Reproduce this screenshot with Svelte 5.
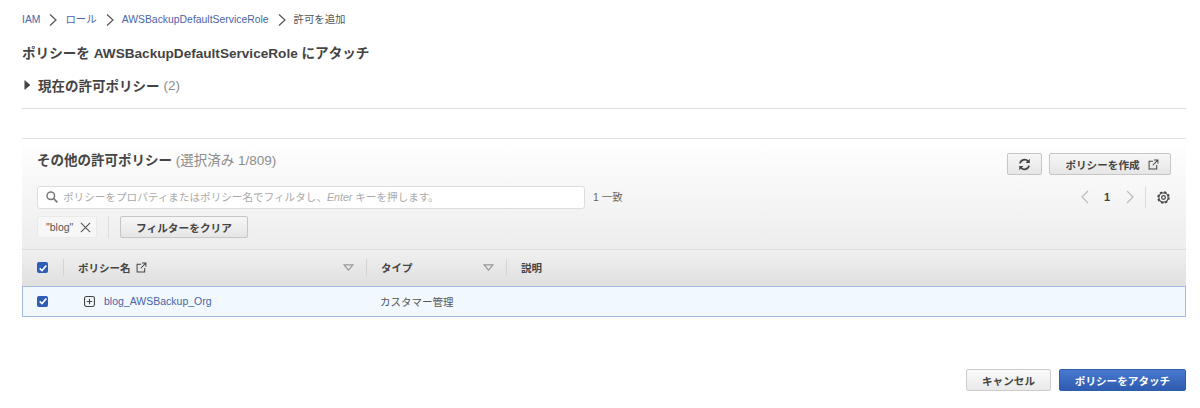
<script>
  const roleName = 'AWSBackupDefaultServiceRole';
</script>

<div class="page">
  <nav class="crumbs">
    <a href="#iam">IAM</a>
    <svg class="sep" viewBox="0 0 10 14" width="10" height="14"><path d="M2 1.5 8 7 2 12.5" /></svg>
    <a href="#role">ロール</a>
    <svg class="sep" viewBox="0 0 10 14" width="10" height="14"><path d="M2 1.5 8 7 2 12.5" /></svg>
    <a href="#name">{roleName}</a>
    <svg class="sep" viewBox="0 0 10 14" width="10" height="14"><path d="M2 1.5 8 7 2 12.5" /></svg>
    <span>許可を追加</span>
  </nav>

  <h1>ポリシーを {roleName} にアタッチ</h1>

  <div class="current">
    <svg viewBox="0 0 8 12" width="8" height="12"><path d="M2.8 1.6 8 6 2.8 10.4Z" fill="#444" stroke="#444" stroke-width="0.6" /></svg>
    <strong>現在の許可ポリシー</strong>
    <span class="count">(2)</span>
  </div>

  <div class="rule"></div>

  <section class="panel">
    <div class="panel-head">
      <div class="title-row">
        <h2>その他の許可ポリシー <span class="count">(選択済み 1/809)</span></h2>
        <div class="actions">
          <button class="btn icon-btn" aria-label="更新">
            <svg viewBox="0 0 16 16" width="13" height="13">
              <path d="M2.4 6.6A5.8 5.8 0 0 1 12.4 4" fill="none" stroke="#444" stroke-width="2.2" />
              <path d="M14.5 1v5.2H9.3Z" fill="#444" />
              <path d="M13.6 9.4A5.8 5.8 0 0 1 3.6 12" fill="none" stroke="#444" stroke-width="2.2" />
              <path d="M1.5 15V9.8h5.2Z" fill="#444" />
            </svg>
          </button>
          <button class="btn create">
            ポリシーを作成
            <svg class="ext" viewBox="0 0 12 12" width="11" height="11">
              <path d="M5.5 2.5H1.2v8.3h8.3V6.5M6.5 1h4.3v4.3M10.6 1.2 5.2 6.8" />
            </svg>
          </button>
        </div>
      </div>

      <div class="search-row">
        <div class="search">
          <svg viewBox="0 0 14 14" width="12" height="12">
            <circle cx="5.6" cy="5.6" r="4.4" fill="none" stroke="#777" stroke-width="1.7" />
            <path d="M9 9l4.2 4.2" stroke="#777" stroke-width="2" />
          </svg>
          <span>ポリシーをプロパティまたはポリシー名でフィルタし、<em>Enter</em> キーを押します。</span>
        </div>
        <span class="match">1 一致</span>
        <div class="pager">
          <svg class="chev" viewBox="0 0 10 14" width="10" height="14"><path d="M8 1 2 7l6 6" /></svg>
          <b>1</b>
          <svg class="chev" viewBox="0 0 10 14" width="10" height="14"><path d="M2 1l6 6-6 6" /></svg>
          <i class="pager-sep"></i>
          <svg class="gear" viewBox="0 0 14 14" width="13" height="13">
            <circle cx="7" cy="7" r="6" fill="none" stroke="#444" stroke-width="1.5" stroke-dasharray="2.6 2.11" />
            <circle cx="7" cy="7" r="5" fill="none" stroke="#444" stroke-width="1.3" />
            <circle cx="7" cy="7" r="2" fill="none" stroke="#444" stroke-width="1.3" />
          </svg>
        </div>
      </div>

      <div class="filter-row">
        <span class="token">"blog"
          <svg viewBox="0 0 12 12" width="11" height="11"><path d="M1 1l10 10M11 1 1 11" /></svg>
        </span>
        <i class="filter-sep"></i>
        <button class="btn clear">フィルターをクリア</button>
      </div>
    </div>

    <div class="table-head">
      <div class="cell-check">
        <span class="check"><svg viewBox="0 0 12 12" width="10" height="10"><path d="M2 6.4 4.8 9 10 3" /></svg></span>
      </div>
      <div class="col-name">
        <span>ポリシー名</span>
        <svg class="ext" viewBox="0 0 12 12" width="11" height="11">
          <path d="M5.5 2.5H1.2v8.3h8.3V6.5M6.5 1h4.3v4.3M10.6 1.2 5.2 6.8" />
        </svg>
        <svg class="sort" viewBox="0 0 12 8" width="11" height="7"><path d="M1 1h10L6 7Z" /></svg>
      </div>
      <div class="col-type">
        <span>タイプ</span>
        <svg class="sort" viewBox="0 0 12 8" width="11" height="7"><path d="M1 1h10L6 7Z" /></svg>
      </div>
      <div class="col-desc">説明</div>
    </div>

    <div class="table-row">
      <div class="cell-check">
        <span class="check"><svg viewBox="0 0 12 12" width="10" height="10"><path d="M2 6.4 4.8 9 10 3" /></svg></span>
      </div>
      <div class="row-name">
        <svg viewBox="0 0 12 12" width="11" height="11">
          <rect x="0.6" y="0.6" width="10.8" height="10.8" rx="2" fill="none" stroke="#444" stroke-width="1.2" />
          <path d="M3 6h6M6 3v6" stroke="#444" stroke-width="1.2" />
        </svg>
        <a href="#policy">blog_AWSBackup_Org</a>
      </div>
      <div class="row-type">カスタマー管理</div>
    </div>
  </section>

  <footer class="foot">
    <button class="btn cancel">キャンセル</button>
    <button class="btn primary">ポリシーをアタッチ</button>
  </footer>
</div>

<style>
  :global(body) {
    margin: 0;
    background: #fff;
  }
  .page {
    box-sizing: border-box;
    width: 1200px;
    height: 408px;
    padding: 13px 14px 0 22px;
    overflow: hidden;
    color: #444;
    font-family: "Liberation Sans", "Noto Sans CJK JP", sans-serif;
    font-size: 11px;
  }
  a {
    color: #4a64a8;
    text-decoration: none;
  }
  .crumbs {
    display: flex;
    align-items: center;
    height: 14px;
    line-height: 14px;
    font-size: 10.4px;
    color: #555;
  }
  .sep {
    margin: 0 7px 0 8px;
    fill: none;
    stroke: #555;
    stroke-width: 1.2;
  }
  h1 {
    margin: 19px 0 0;
    font-size: 13.6px;
    line-height: 16px;
    font-weight: 700;
    color: #444;
  }
  .current {
    display: flex;
    align-items: center;
    gap: 8px;
    margin-top: 15px;
    height: 16px;
    font-size: 13.5px;
  }
  .current strong {
    color: #444;
  }
  .current .count {
    margin-left: -4px;
  }
  .count {
    font-weight: 400;
    color: #8c8c8c;
  }
  .rule {
    margin-top: 15px;
    height: 1px;
    background: #ddd;
  }
  .panel {
    margin-top: 29px;
    border-top: 1px solid #e2e2e2;
  }
  .panel-head {
    box-sizing: border-box;
    height: 111px;
    padding: 11px 15px 0;
    background: linear-gradient(#fff, #ededed);
    border-bottom: 1px solid #ddd;
  }
  .title-row {
    display: flex;
    justify-content: space-between;
    align-items: flex-start;
    height: 36px;
  }
  h2 {
    margin: 2px 0 0;
    font-size: 13.5px;
    line-height: 18px;
    font-weight: 700;
    color: #444;
  }
  .actions {
    display: flex;
    gap: 7px;
    margin-top: 3px;
  }
  .btn {
    box-sizing: border-box;
    display: inline-flex;
    align-items: center;
    justify-content: center;
    height: 22px;
    padding: 0;
    border: 1px solid #c6c6c6;
    border-radius: 2px;
    background: linear-gradient(#f6f6f6, #e6e6e6);
    color: #444;
    font-family: inherit;
    font-size: 10.6px;
    font-weight: 700;
  }
  .icon-btn {
    width: 35px;
  }
  .create {
    width: 122px;
    gap: 8px;
    padding-left: 4px;
  }
  .ext {
    fill: none;
    stroke: #444;
    stroke-width: 1.1;
  }
  .search-row {
    display: flex;
    align-items: center;
    height: 23px;
  }
  .search {
    box-sizing: border-box;
    display: flex;
    align-items: center;
    gap: 5px;
    width: 548px;
    height: 23px;
    padding: 0 0 2px 8px;
    background: #fff;
    border: 1px solid #ddd;
    border-radius: 3px;
    color: #aaa;
    font-size: 10.6px;
    white-space: nowrap;
  }
  .match {
    margin-left: 8px;
    margin-top: -2px;
    font-size: 10.5px;
    color: #666;
  }
  .pager {
    display: flex;
    align-items: center;
    margin-left: auto;
    margin-right: 1px;
    height: 22px;
    padding-bottom: 1px;
  }
  .chev {
    fill: none;
    stroke: #bbb;
    stroke-width: 1.2;
  }
  .pager b {
    margin: 0 15px 0 14px;
    font-size: 11px;
    color: #444;
  }
  .pager-sep {
    width: 1px;
    height: 22px;
    margin: 0 11px 0 10px;
    background: #ddd;
  }
  .filter-row {
    display: flex;
    align-items: center;
    margin-top: 7px;
  }
  .token {
    box-sizing: border-box;
    display: flex;
    align-items: center;
    gap: 7px;
    width: 60px;
    height: 22px;
    padding-left: 8px;
    background: #f7f7f7;
    border: 1px solid #eaeaea;
    border-radius: 2px;
    font-size: 10.5px;
    color: #555;
  }
  .token svg {
    fill: none;
    stroke: #555;
    stroke-width: 1.2;
  }
  .filter-sep {
    width: 1px;
    height: 22px;
    margin: 0 11px;
    background: #ddd;
  }
  .clear {
    width: 128px;
    font-size: 10.7px;
  }
  .table-head {
    box-sizing: border-box;
    display: flex;
    align-items: center;
    height: 37px;
    padding-bottom: 2px;
    background: linear-gradient(#f0f0f0, #dfdfdf);
    font-size: 10.5px;
    font-weight: 700;
    color: #444;
  }
  .cell-check {
    display: flex;
    align-items: center;
    justify-content: flex-start;
    box-sizing: border-box;
    width: 41px;
    padding-left: 15px;
    flex: none;
  }
  .check {
    display: flex;
    align-items: center;
    justify-content: center;
    width: 11px;
    height: 11px;
    background: #2f5cb5;
    border-radius: 2px;
  }
  .check svg {
    fill: none;
    stroke: #fff;
    stroke-width: 2;
  }
  .col-name,
  .col-type,
  .col-desc {
    box-sizing: border-box;
    display: flex;
    align-items: center;
    gap: 5px;
    height: 17px;
    padding-left: 14px;
    border-left: 1px solid #d4d4d4;
  }
  .col-name {
    width: 303px;
  }
  .col-type {
    width: 140px;
  }
  .col-desc {
    flex: 1;
  }
  .sort {
    margin-left: auto;
    margin-right: 12px;
    fill: none;
    stroke: #999;
    stroke-width: 1.4;
  }
  .table-row {
    box-sizing: border-box;
    display: flex;
    align-items: center;
    height: 31px;
    padding-bottom: 1px;
    background: #f1f8fe;
    border: 1px solid #a3bbe3;
    margin-top: -1px;
    font-size: 10.5px;
  }
  .table-row .cell-check {
    width: 40px;
    padding-left: 14px;
  }
  .row-name {
    display: flex;
    align-items: center;
    gap: 9px;
    width: 317px;
    padding-left: 21px;
    box-sizing: border-box;
  }
  .row-type {
    color: #555;
  }
  .foot {
    display: flex;
    justify-content: flex-end;
    gap: 8px;
    margin-top: 52px;
  }
  .cancel {
    width: 85px;
    border-color: #ccc;
    background: linear-gradient(#fafafa, #e9e9e9);
  }
  .primary {
    width: 127px;
    border: 1px solid #2f5ea8;
    background: linear-gradient(#4878cf, #2f5cb0);
    color: #fff;
  }
</style>
